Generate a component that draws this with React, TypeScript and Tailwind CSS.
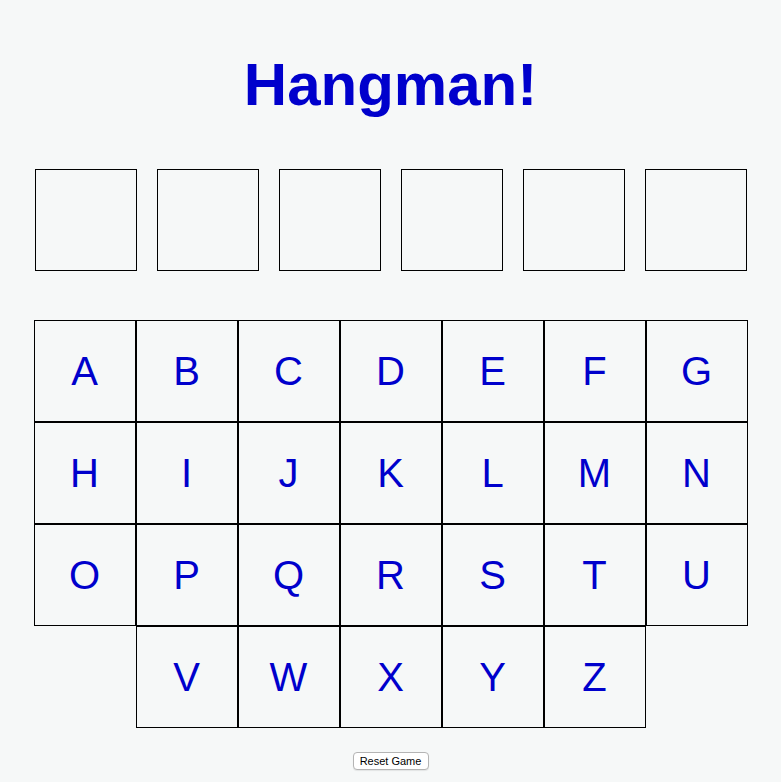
import React from "react";

const LETTERS = "ABCDEFGHIJKLMNOPQRSTUVWXYZ".split("");

export default function App() {
  return (
    <div className="min-h-screen bg-[#f6f8f8] font-['Liberation_Sans',Arial,sans-serif] flex flex-col items-center">
      <h1 className="mt-[55px] text-[60px] leading-none font-bold text-[#0000cc]">Hangman!</h1>
      <div className="mt-[54px] flex gap-[20px]">
        {Array.from({ length: 6 }).map((_, i) => (
          <div key={i} className="w-[102px] h-[102px] border border-black" />
        ))}
      </div>
      <div className="mt-[49px] w-[714px] flex flex-wrap justify-center">
        {LETTERS.map((l) => (
          <div
            key={l}
            className="w-[102px] h-[102px] border border-black flex items-center justify-center text-[40px] leading-none text-[#0000cc]"
          >
            {l}
          </div>
        ))}
      </div>
      <button className="mt-[24px] h-[18px] w-[76px] text-[11px] leading-none text-black bg-white border border-[#b4b4b4] rounded-[4px] shadow-[0_1px_1px_rgba(0,0,0,0.08)]">
        Reset Game
      </button>
    </div>
  );
}
